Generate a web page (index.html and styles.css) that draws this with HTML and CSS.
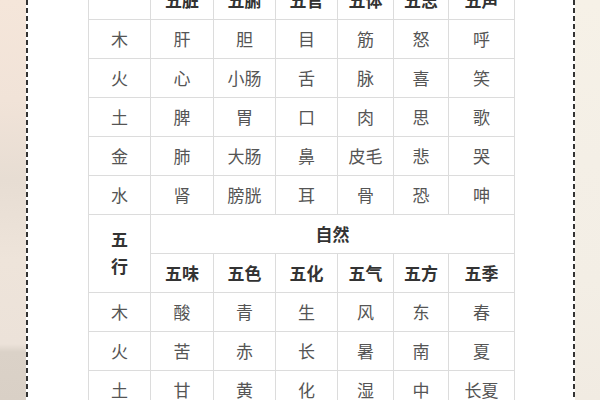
FILE: index.html
```html
<!DOCTYPE html>
<html lang="zh">
<head>
<meta charset="utf-8">
<title>五行对照表</title>
<link rel="stylesheet" href="styles.css">
</head>
<body>
<div class="page">
  <div class="strip strip-left"></div>
  <div class="dash"></div>
  <div class="paper">
    <table class="grid">
      <colgroup>
        <col class="c1"><col class="c2"><col class="c3"><col class="c4"><col class="c5"><col class="c6"><col class="c7">
      </colgroup>
      <tr class="head"><td></td><td>五脏</td><td>五腑</td><td>五官</td><td>五体</td><td>五志</td><td>五声</td></tr>
      <tr><td>木</td><td>肝</td><td>胆</td><td>目</td><td>筋</td><td>怒</td><td>呼</td></tr>
      <tr><td>火</td><td>心</td><td>小肠</td><td>舌</td><td>脉</td><td>喜</td><td>笑</td></tr>
      <tr><td>土</td><td>脾</td><td>胃</td><td>口</td><td>肉</td><td>思</td><td>歌</td></tr>
      <tr><td>金</td><td>肺</td><td>大肠</td><td>鼻</td><td>皮毛</td><td>悲</td><td>哭</td></tr>
      <tr><td>水</td><td>肾</td><td>膀胱</td><td>耳</td><td>骨</td><td>恐</td><td>呻</td></tr>
      <tr class="head"><td rowspan="2" class="wx">五<br>行</td><td colspan="6">自然</td></tr>
      <tr class="head"><td>五味</td><td>五色</td><td>五化</td><td>五气</td><td>五方</td><td>五季</td></tr>
      <tr><td>木</td><td>酸</td><td>青</td><td>生</td><td>风</td><td>东</td><td>春</td></tr>
      <tr><td>火</td><td>苦</td><td>赤</td><td>长</td><td>暑</td><td>南</td><td>夏</td></tr>
      <tr><td>土</td><td>甘</td><td>黄</td><td>化</td><td>湿</td><td>中</td><td>长夏</td></tr>
    </table>
  </div>
  <div class="dash"></div>
  <div class="strip strip-right"></div>
</div>
</body>
</html>
```
FILE: styles.css
```css
html, body {
  margin: 0;
  padding: 0;
  background: #ffffff;
}
.page {
  display: flex;
  width: 600px;
  height: 400px;
  overflow: hidden;
}
.strip-left {
  width: 26px;
  background: linear-gradient(to bottom, #f5e6da 0%, #f1e3d8 25%, #e7ddd3 45%, #eee4da 65%, #ece2d9 86%, #dbd2c8 88%, #d9d0c6 100%);
}
.strip-right {
  width: 25px;
  background: linear-gradient(to bottom, #f6f1e7 0%, #f4efe6 40%, #f3eee5 70%, #f1ebe2 100%);
}
.dash {
  width: 2px;
  background: repeating-linear-gradient(to bottom, #333 0 5px, transparent 5px 8px);
  background-color: #fff;
}
.paper {
  flex: 1;
  background: #ffffff;
  display: flex;
  justify-content: center;
  align-items: flex-start;
}
.grid {
  margin-top: -20px;
  margin-left: 2px;
  border-collapse: collapse;
  table-layout: fixed;
  width: 426px;
  font-family: "Noto Sans CJK SC", "Noto Sans", sans-serif;
  font-size: 17px;
  color: #555;
}
.c1 { width: 62px; }
.c2 { width: 63px; }
.c3 { width: 62px; }
.c4 { width: 62px; }
.c5 { width: 56px; }
.c6 { width: 55px; }
.c7 { width: 66px; }
.grid tr {
  height: 39px;
}
.grid td {
  border: 1px solid #dcdcdc;
  padding: 0;
  text-align: center;
  vertical-align: middle;
  line-height: 20px;
}
.grid .head td {
  font-weight: bold;
  color: #333;
}
.grid .wx {
  line-height: 27px;
  padding-bottom: 3px;
}
```
